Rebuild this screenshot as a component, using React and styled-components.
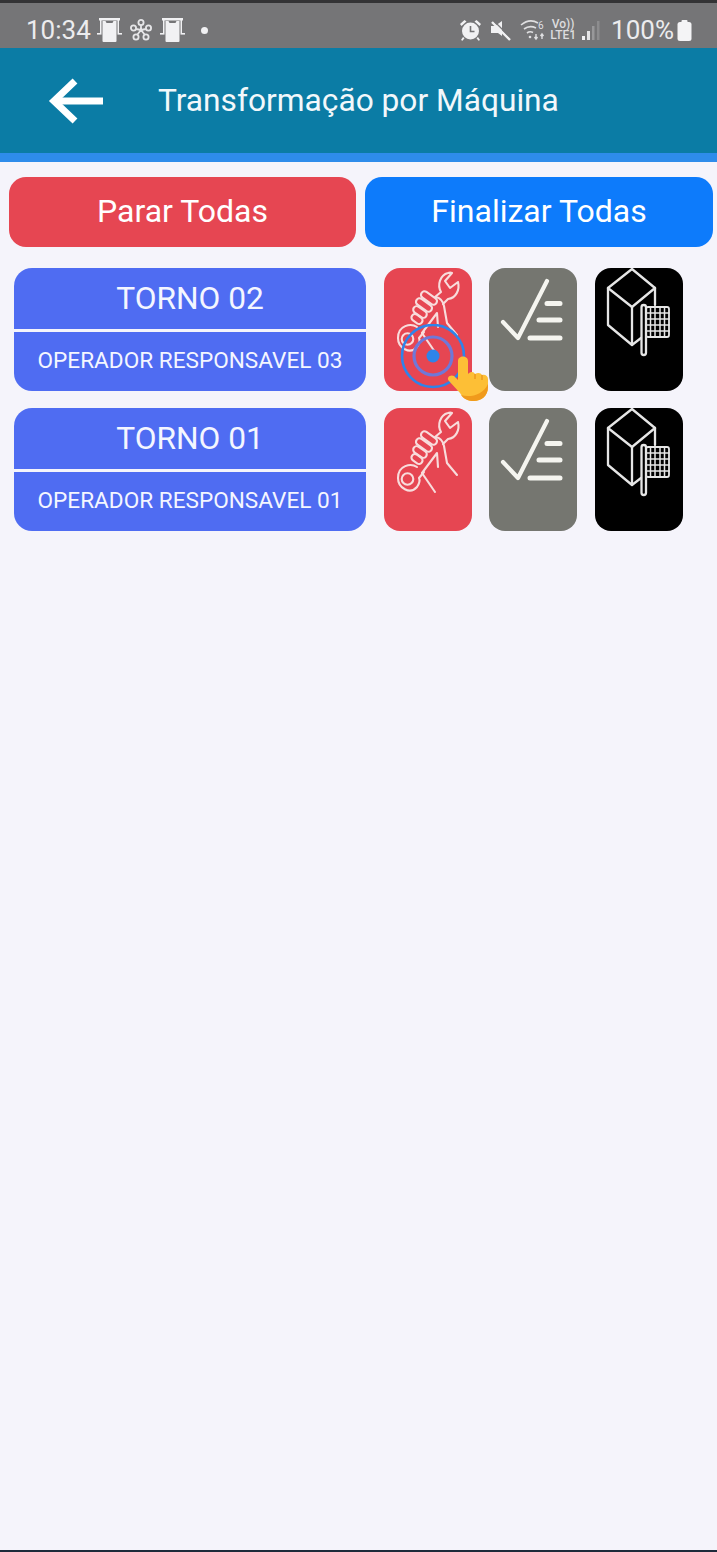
import React from "react";
import styled, { createGlobalStyle } from "styled-components";

const GlobalStyle = createGlobalStyle`
    html, body {
        margin: 0;
        padding: 0;
        background-color: #f5f4fb;
        font-family: Roboto, "Liberation Sans", sans-serif;
    }
`;

const Page = styled.div`
    width: 717px;
    height: 1552px;
    box-sizing: border-box;
    overflow: hidden;
    display: flex;
    flex-direction: column;
    background-color: #f5f4fb;
    border-bottom: 2px solid #1d2a3a;
`;

const TopEdge = styled.div`
    height: 3px;
    background-color: #333335;
`;

const StatusBar = styled.div`
    height: 45px;
    box-sizing: border-box;
    padding: 9px 25px 0 26px;
    display: flex;
    align-items: center;
    justify-content: space-between;
    background-color: #757577;
    color: #ececee;
`;

const StatusGroup = styled.div`
    display: flex;
    align-items: center;
`;

const StatusSlot = styled.div`
    display: flex;
    align-items: center;
    margin-left: ${(p) => p.$ml || 0}px;
`;

const StatusText = styled.span`
    font-size: 26px;
    line-height: 30px;
`;

const StatusDot = styled.span`
    width: 7px;
    height: 7px;
    margin-left: 16px;
    border-radius: 50%;
    background-color: #f1f1f3;
`;

const Volte = styled.div`
    display: flex;
    flex-direction: column;
    align-items: center;
    font-size: 12px;
    line-height: 11px;
    font-weight: 500;
    color: #dcdcde;
`;

const Header = styled.div`
    height: 105px;
    box-sizing: border-box;
    padding-left: 48px;
    display: flex;
    align-items: center;
    gap: 54px;
    background-color: #0b7ca5;
    color: #f2f8fb;
`;

const Title = styled.h1`
    margin: 0;
    font-size: 31.7px;
    font-weight: 400;
`;

const HeaderStrip = styled.div`
    height: 9px;
    background-color: #2e8ceb;
`;

const Content = styled.div`
    padding: 15px 4px 0 9px;
    display: flex;
    flex-direction: column;
`;

const Actions = styled.div`
    display: flex;
    justify-content: space-between;
    margin-bottom: 21px;
`;

const ActionButton = styled.button`
    width: ${(p) => p.$width}px;
    height: 70px;
    border: none;
    border-radius: 17px;
    padding: 0 0 2px;
    background-color: ${(p) => p.$color};
    color: #fff;
    font-family: inherit;
    font-size: 32px;
`;

const MachineList = styled.div`
    display: flex;
    flex-direction: column;
    gap: 17px;
    padding-left: 5px;
`;

const MachineRow = styled.div`
    display: flex;
    align-items: stretch;
`;

const MachineCard = styled.div`
    width: 352px;
    height: 123px;
    margin-right: 18px;
    border-radius: 18px;
    overflow: hidden;
    display: flex;
    flex-direction: column;
    background-color: #4f6cf2;
    color: #f4f6ff;
`;

const MachineName = styled.div`
    height: 61px;
    display: flex;
    align-items: center;
    justify-content: center;
    border-bottom: 3px solid #f5f4fb;
    font-size: 31.7px;
`;

const OperatorName = styled.div`
    flex: 1;
    display: flex;
    align-items: center;
    justify-content: center;
    padding-bottom: 2px;
    font-size: 22.6px;
`;

const Tools = styled.div`
    display: flex;
    gap: 17px;
`;

const ToolTile = styled.button`
    position: relative;
    width: 88px;
    height: 123px;
    padding: 0;
    margin-left: ${(p) => p.$ml || 0}px;
    border: none;
    border-radius: 16px;
    background-color: ${(p) => p.$color};
    color: ${(p) => p.$ink};
`;

const TileIcon = styled.svg`
    display: block;
    width: 88px;
    height: 123px;
    fill: none;
    stroke: currentColor;
    stroke-linecap: round;
    stroke-linejoin: round;
`;

const TapMarker = styled.svg`
    position: absolute;
    left: 16px;
    top: 56px;
    width: 92px;
    height: 80px;
    pointer-events: none;
`;

const BackArrow = () => (
    <svg width="56" height="46" viewBox="0 0 56 46" fill="none" stroke="#fff" strokeWidth="7">
        <path d="M55 23H6" />
        <path d="M27 3 6 23l21 20" />
    </svg>
);

const CastIcon = () => (
    <svg width="25" height="24" viewBox="0 0 25 24" fill="#f1f1f3">
        <path d="M2 0h21v2.500h-1V15h-1.500V2.500H4.500V15H3V2.500H2z" />
        <path d="M5.500 3h3l1 2h6l1-2h3v20a1 1 0 0 1-1 1h-12a1 1 0 0 1-1-1z" />
        <rect x="0" y="15" width="4.500" height="1.600" />
        <rect x="20.500" y="15" width="4.500" height="1.600" />
    </svg>
);

const NodesIcon = () => (
    <svg width="22" height="22" viewBox="0 0 22 22" fill="none" stroke="#e6e6e8" strokeWidth="1.800">
        <circle cx="11" cy="3.500" r="2.600" />
        <circle cx="3.500" cy="9" r="2.600" />
        <circle cx="18.500" cy="9" r="2.600" />
        <circle cx="6" cy="18" r="2.600" />
        <circle cx="16" cy="18" r="2.600" />
        <path d="M11 6v5M6 10l5 1 5-1M7 16l4-5 4 5" />
    </svg>
);

const AlarmIcon = () => (
    <svg width="21" height="22" viewBox="0 0 21 22" fill="#f1f1f3">
        <circle cx="10.500" cy="12" r="8.500" />
        <path d="M0 5 4.500 1l2 1.500L1.500 7zM21 5 16.500 1l-2 1.500 5 4.500zM3 18l-2 3 1.500.7 2-2.500zM18 18l2 3-1.500.7-2-2.500z" />
        <path d="M10.500 7v5.500h4" fill="none" stroke="#757577" strokeWidth="1.600" />
    </svg>
);

const MuteIcon = () => (
    <svg width="21" height="21" viewBox="0 0 21 21" fill="#f1f1f3">
        <path d="M1 6h4l7-5v15l-4-3H1z" />
        <path d="M2 2 20 20" stroke="#f1f1f3" strokeWidth="2.400" />
        <path d="M4 1 20 17" stroke="#757577" strokeWidth="1.200" />
    </svg>
);

const WifiIcon = () => (
    <svg width="26" height="22" viewBox="0 0 26 22" fill="none" stroke="#dfdfe1" strokeWidth="1.600">
        <path d="M1 6c6-5 12-5 17-2M4 10c4-3 8-3 12-1M7 14c2-1.500 4-1.500 6-.5" />
        <circle cx="10" cy="18" r="1.300" fill="#dfdfe1" stroke="none" />
        <path d="M16 15v5M14.500 18l1.500 2 1.500-2M22 20v-5M20.500 17l1.500-2 1.500 2" strokeWidth="1.400" />
        <text x="18" y="10" fontSize="10" fill="#dfdfe1" stroke="none" fontFamily="Roboto, sans-serif">6</text>
    </svg>
);

const SignalIcon = () => (
    <svg width="18" height="21" viewBox="0 0 18 21">
        <rect x="0" y="16" width="3" height="4" fill="#f1f1f3" />
        <rect x="5" y="11" width="3" height="9" fill="#e4e4e6" />
        <rect x="10" y="6" width="2.500" height="14" fill="#98989a" />
        <rect x="15" y="1" width="2.500" height="19" fill="#8c8c8e" />
    </svg>
);

const BatteryIcon = () => (
    <svg width="15" height="21" viewBox="0 0 15 21" fill="#f4f4f6">
        <rect x="4.500" y="0" width="6" height="3" rx="1" />
        <rect x="0.500" y="2" width="14" height="19" rx="2.500" />
    </svg>
);

const WrenchIcon = () => (
    <TileIcon viewBox="0 0 88 123" strokeWidth="2.100">
        <path d="M33 59C27 55 14 57 14 70c0 10 12 17 19 9 2-3 3-7 2-9l5-6" />
        <circle cx="23.500" cy="71" r="5.800" />
        <path d="M51 29l6-5c-4-7-1-17 7-19 1.500-.5 3-.5 4 0l-7 8 5 7 8-6c2 8-2 16-10 17l-5 5" />
        <rect x="36" y="26.500" width="18" height="7" rx="3.500" transform="rotate(35 45 30)" />
        <rect x="31" y="33.500" width="18" height="7" rx="3.500" transform="rotate(35 40 37)" />
        <rect x="28.500" y="40.500" width="15" height="7" rx="3.500" transform="rotate(35 36 44)" />
        <rect x="27" y="47.500" width="12" height="7" rx="3.500" transform="rotate(35 33 51)" />
        <path d="M52 29c4 1 7 4 8 9l3 17 10 12" />
        <path d="M38 65l15-20 1 14" />
        <path d="M38 65l13 19" />
    </TileIcon>
);

const ChecklistIcon = () => (
    <TileIcon viewBox="0 0 88 123" strokeWidth="4.200">
        <path d="M14 54 29 70 58 13" />
        <path d="M58 35.500H71M50 52H71M41 70H71" strokeWidth="5" />
    </TileIcon>
);

const PackageIcon = () => (
    <TileIcon viewBox="0 0 88 123" strokeWidth="2.300">
        <path d="M37 1 60 20 37 39 13 20z" />
        <path d="M13 20V57L37 77V39M60 20V37M37 77 46 70" />
        <rect x="46.500" y="37" width="4.500" height="50" rx="2.200" />
        <rect x="51" y="39" width="23" height="30" rx="2" strokeWidth="1.800" />
        <path d="M55.500 39V69M60 39V69M65 39V69M69.500 39V69M51 45H74M51 51H74M51 57H74M51 63H74" strokeWidth="1.500" />
    </TileIcon>
);

const TapIndicator = () => (
    <TapMarker viewBox="0 0 92 80" fill="none">
        <circle cx="33" cy="32" r="31" stroke="#2e84ea" strokeWidth="2.600" />
        <circle cx="33" cy="32" r="19" stroke="#6f78d8" strokeWidth="3.200" />
        <circle cx="33" cy="32" r="6.500" fill="#2e84ea" />
        <path
            d="M58 37c0-6 10-6 10 0v13c3-3 6-2 7 0 3-2 6-1 7 1 3-1 6 1 6 4v8c0 9-7 14-14 14-7 0-11-3-14-8l-11-12c-3-3 1-7 5-5l4 4z"
            fill="#fdbf36"
        />
        <path d="M75 50v5M82 51v5" stroke="#e8901a" strokeWidth="1.200" />
        <path d="M88 60v3c0 9-7 14-14 14-6 0-10-2-13-6 9 3 22 0 27-11z" fill="#f09a1c" />
    </TapMarker>
);

const machines = [
    { nome: "TORNO 02", operador: "OPERADOR RESPONSAVEL 03", tapped: true },
    { nome: "TORNO 01", operador: "OPERADOR RESPONSAVEL 01", tapped: false },
];

const App = () => {
    return (
        <Page>
            <GlobalStyle />
            <TopEdge />
            <StatusBar>
                <StatusGroup>
                    <StatusText>10:34</StatusText>
                    <StatusSlot $ml={6}><CastIcon /></StatusSlot>
                    <StatusSlot $ml={8}><NodesIcon /></StatusSlot>
                    <StatusSlot $ml={8}><CastIcon /></StatusSlot>
                    <StatusDot />
                </StatusGroup>
                <StatusGroup>
                    <AlarmIcon />
                    <StatusSlot $ml={9}><MuteIcon /></StatusSlot>
                    <StatusSlot $ml={9}><WifiIcon /></StatusSlot>
                    <StatusSlot $ml={4}>
                        <Volte>
                            <span>Vo))</span>
                            <span>LTE1</span>
                        </Volte>
                    </StatusSlot>
                    <StatusSlot $ml={6}><SignalIcon /></StatusSlot>
                    <StatusSlot $ml={11}><StatusText>100%</StatusText></StatusSlot>
                    <StatusSlot $ml={3}><BatteryIcon /></StatusSlot>
                </StatusGroup>
            </StatusBar>
            <Header>
                <BackArrow />
                <Title>Transformação por Máquina</Title>
            </Header>
            <HeaderStrip />
            <Content>
                <Actions>
                    <ActionButton $color="#e64652" $width={347}>Parar Todas</ActionButton>
                    <ActionButton $color="#0d7bfb" $width={348}>Finalizar Todas</ActionButton>
                </Actions>
                <MachineList>
                    {machines.map((m) => (
                        <MachineRow key={m.nome}>
                            <MachineCard>
                                <MachineName>{m.nome}</MachineName>
                                <OperatorName>{m.operador}</OperatorName>
                            </MachineCard>
                            <Tools>
                                <ToolTile $color="#e64652" $ink="#f8dcdc">
                                    <WrenchIcon />
                                    {m.tapped && <TapIndicator />}
                                </ToolTile>
                                <ToolTile $color="#757670" $ink="#f5f5f0">
                                    <ChecklistIcon />
                                </ToolTile>
                                <ToolTile $color="#000" $ink="#e6e6e6" $ml={1}>
                                    <PackageIcon />
                                </ToolTile>
                            </Tools>
                        </MachineRow>
                    ))}
                </MachineList>
            </Content>
        </Page>
    );
};

export default App;
